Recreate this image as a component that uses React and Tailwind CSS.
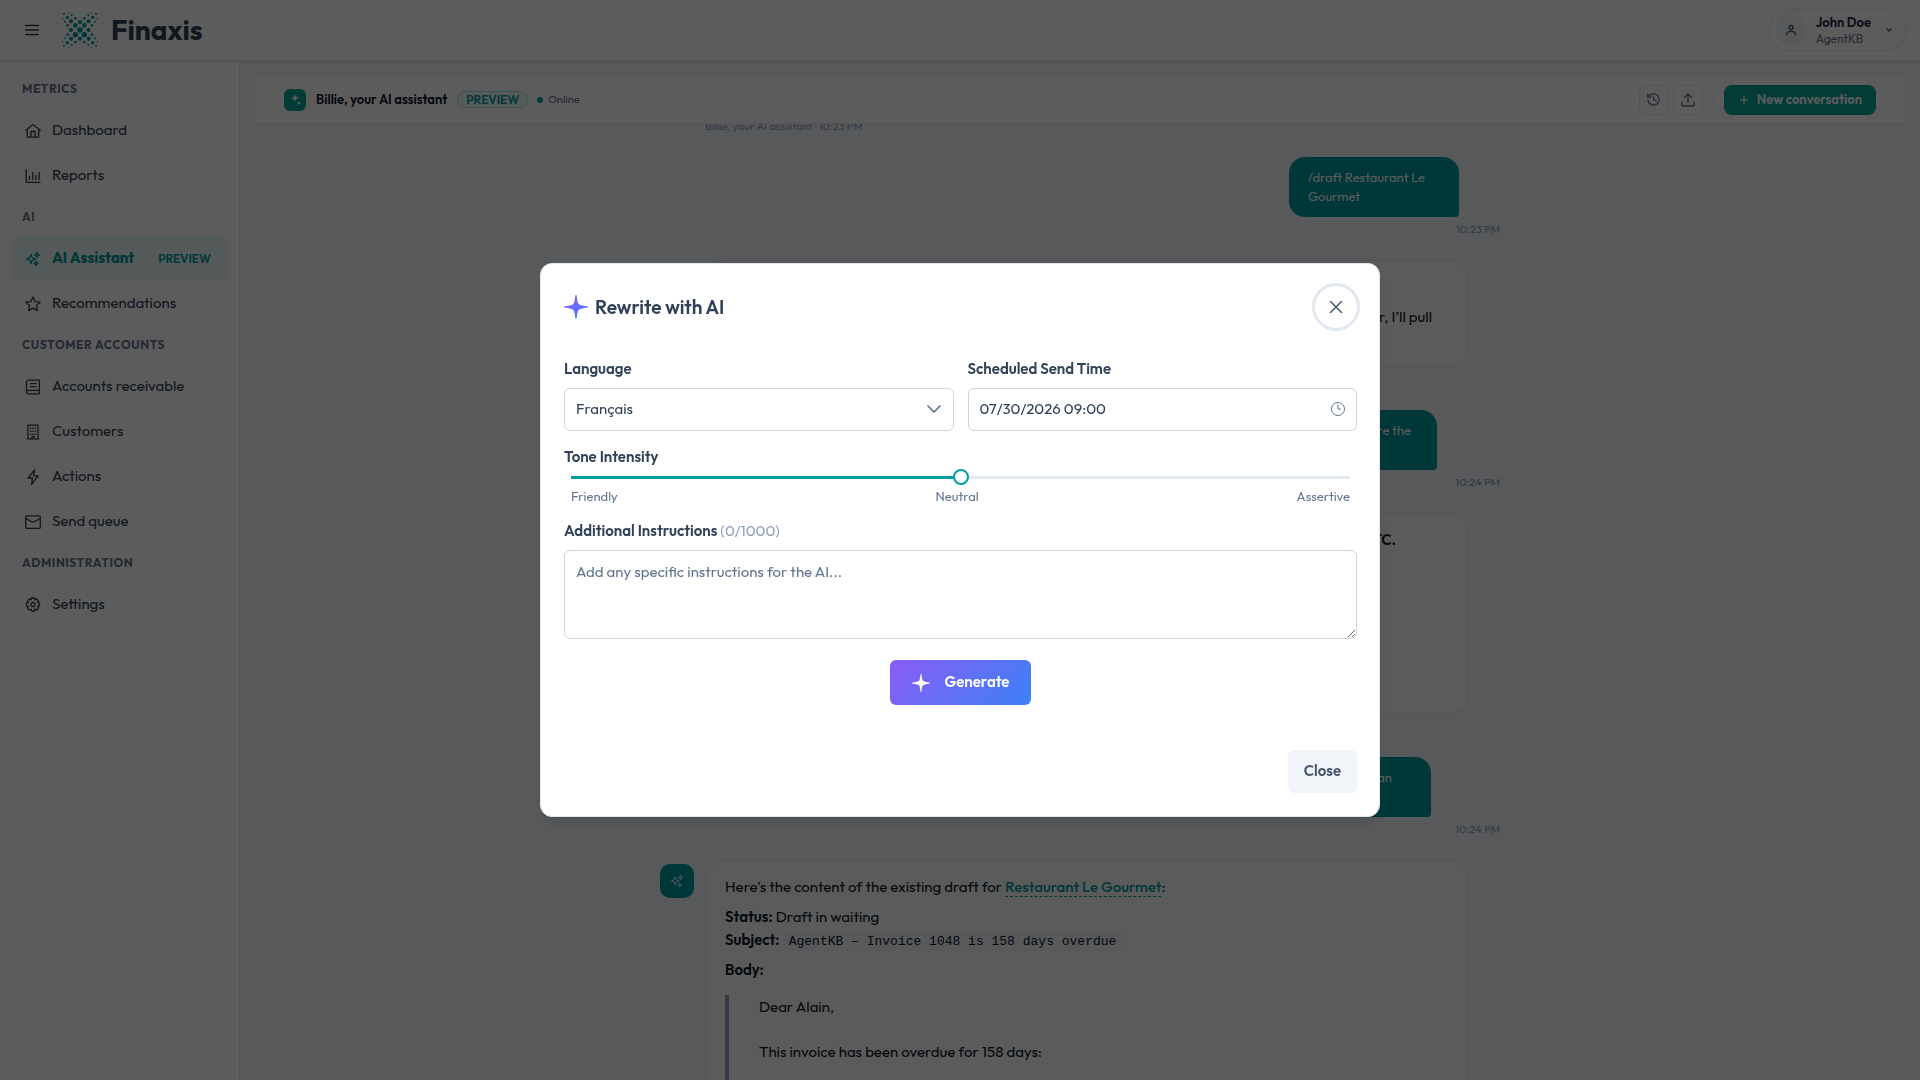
import React, { useState } from 'react';
import { ChevronDown, History, Plus, Upload, X } from 'lucide-react';
import { HiOutlineSparkles } from 'react-icons/hi2';

const LOGO_DOTS = [
  [54, 54, 8], [40, 40, 7], [67, 40, 7], [40, 68, 8], [67, 68, 8],
  [54, 30, 6], [54, 80, 6], [27, 54, 6], [80, 54, 6],
  [27, 28, 6], [80, 28, 6], [27, 80, 6], [80, 80, 6],
  [40, 19, 4], [67, 19, 4], [40, 90, 4], [67, 90, 4],
  [17, 40, 4], [90, 40, 4], [17, 68, 4], [90, 68, 4],
  [16, 16, 5], [92, 16, 5], [16, 92, 5], [92, 92, 5],
  [29, 10, 3], [79, 10, 3], [29, 98, 3], [79, 98, 3],
  [9, 29, 3], [99, 29, 3], [9, 79, 3], [99, 79, 3],
  [6, 6, 3], [102, 6, 3], [6, 102, 3], [102, 102, 3],
  [20, 3, 2], [88, 3, 2], [20, 106, 2], [88, 106, 2],
  [2, 20, 2], [106, 20, 2], [2, 88, 2], [106, 88, 2],
];

const Logo = () => (
  <svg viewBox="0 0 108 108" className="size-9" fill="#00999e" aria-hidden="true">
    {LOGO_DOTS.map(([cx, cy, r]) => (
      <circle key={`${cx}-${cy}`} cx={cx} cy={cy} r={r} />
    ))}
  </svg>
);

const Glyph = ({ children }) => (
  <svg
    viewBox="0 0 16 16"
    className="size-4 shrink-0"
    fill="none"
    stroke="currentColor"
    strokeWidth="1.3"
    strokeLinecap="round"
    strokeLinejoin="round"
    aria-hidden="true"
  >
    {children}
  </svg>
);

const MenuIcon = () => (
  <Glyph>
    <path d="M1.500 3.500h13M1.500 8h13M1.500 12.500h13" />
  </Glyph>
);

const HomeIcon = () => (
  <Glyph>
    <path d="M.8 7.200 8 1.600l7.200 5.600M2.300 6.200v8h11.400v-8M6 14.200V8.500h4v5.700" />
  </Glyph>
);

const ReportsIcon = () => (
  <Glyph>
    <path d="M1.200 1.500v12.800h13.800M4.500 11.500V8.500M7.700 11.500V4.500M10.900 11.500V7.500M14.100 11.500V4.500" />
  </Glyph>
);

const StarIcon = () => (
  <Glyph>
    <path d="m8 1 2.100 4.600 5 .6-3.700 3.400 1 5L8 12.100l-4.400 2.500 1-5L.9 6.200l5-.6z" />
  </Glyph>
);

const LedgerIcon = () => (
  <Glyph>
    <path d="M14.400 1.200H3a1.500 1.500 0 0 0-1.500 1.500v10.500A1.500 1.500 0 0 0 3 14.800h11.400zM1.600 12.600A1.500 1.500 0 0 1 3 11.400h11.400M5.300 4.700h5.800M5.300 7.700h5.800" />
  </Glyph>
);

const BuildingIcon = () => (
  <Glyph>
    <path d="M2 14.800h12M3 14.800V1.200h10v13.600M7 14.800v-2.500h2v2.500" />
    <path d="M5.700 3.500v7.800M8 3.500v7.800M10.300 3.500v7.800" strokeDasharray="1.400 1.600" strokeLinecap="butt" />
  </Glyph>
);

const BoltIcon = () => (
  <Glyph>
    <path d="M9.500 1 3 9h4.500l-1 6.500L13.200 6.800H8.600z" />
  </Glyph>
);

const EnvelopeIcon = () => (
  <Glyph>
    <rect x=".7" y="1.900" width="14.600" height="12.500" rx="1.200" />
    <path d="m.9 4.500 5.800 3.200q1.300.7 2.600 0l5.800-3.200" />
  </Glyph>
);

const GearIcon = () => (
  <Glyph>
    <path d="M6.600 1h2.800l.5 1.900 1.700-1 2 2-1 1.700 1.900.5v2.800l-1.900.5 1 1.700-2 2-1.700-1-.5 1.900H6.600l-.5-1.900-1.700 1-2-2 1-1.700-1.900-.5V6.100l1.900-.5-1-1.700 2-2 1.700 1z" />
    <circle cx="8" cy="7.500" r="2" />
  </Glyph>
);

const SparkleIcon = ({ className, gradient }) => (
  <svg viewBox="0 0 24 24" className={className} fill={gradient ? 'url(#sparkle)' : 'currentColor'} aria-hidden="true">
    {gradient && (
      <defs>
        <linearGradient id="sparkle" x1="0" y1="0" x2="1" y2="1">
          <stop offset="0" stopColor="#8b5cf6" />
          <stop offset="1" stopColor="#3b82f6" />
        </linearGradient>
      </defs>
    )}
    <path d="M11.500 0h1c.8 6 1.200 8 2.200 9s3.300 1.700 9.300 2.500v1c-6 .8-8.300 1.500-9.300 2.500s-1.400 3-2.200 9h-1c-.8-6-1.200-8-2.200-9S6 13.300 0 12.500v-1C6 10.700 8.300 10 9.300 9s1.400-3 2.200-9z" />
  </svg>
);

const NAV = [
  {
    title: 'Metrics',
    items: [
      { label: 'Dashboard', icon: HomeIcon },
      { label: 'Reports', icon: ReportsIcon },
    ],
  },
  {
    title: 'AI',
    items: [
      { label: 'AI Assistant', icon: HiOutlineSparkles, active: true, tag: 'PREVIEW' },
      { label: 'Recommendations', icon: StarIcon },
    ],
  },
  {
    title: 'Customer accounts',
    items: [
      { label: 'Accounts receivable', icon: LedgerIcon },
      { label: 'Customers', icon: BuildingIcon },
      { label: 'Actions', icon: BoltIcon },
      { label: 'Send queue', icon: EnvelopeIcon },
    ],
  },
  {
    title: 'Administration',
    items: [{ label: 'Settings', icon: GearIcon }],
  },
];

function TopBar() {
  return (
    <header className="relative z-10 flex h-[61px] shrink-0 items-center border-b border-slate-200 bg-white pl-6 pr-[13px] shadow-sm">
      <button type="button" aria-label="Toggle menu" className="text-slate-700">
        <MenuIcon />
      </button>
      <div className="ml-[22px] flex items-center gap-[13px]">
        <Logo />
        <span className="text-[28px] leading-9 font-bold text-slate-700">Finaxis</span>
      </div>
      <button
        type="button"
        className="ml-auto flex h-[42px] items-center gap-[10px] rounded-full border border-slate-200 pl-[6px] pr-[13px] text-left"
      >
        <span className="flex size-[30px] items-center justify-center rounded-full bg-slate-100 text-slate-600">
          <svg viewBox="0 0 12 12" className="size-3" fill="none" stroke="currentColor" strokeWidth="1.300" strokeLinecap="round" aria-hidden="true">
            <circle cx="6" cy="3.500" r="2" />
            <path d="M1.500 10.800a4.500 3.500 0 0 1 9 0" />
          </svg>
        </span>
        <span className="mr-1 flex flex-col">
          <span className="text-[13px] leading-[17px] font-semibold text-slate-800">John Doe</span>
          <span className="text-[12px] leading-4 text-slate-500">AgentKB</span>
        </span>
        <ChevronDown className="size-2 text-slate-600" strokeWidth={4} />
      </button>
    </header>
  );
}

function Sidebar() {
  return (
    <nav className="w-60 shrink-0 border-r border-slate-200 bg-white px-[11px] pt-[9px]">
      {NAV.map((group) => (
        <section key={group.title}>
          <h2 className="flex h-[38px] items-center pl-[11px] text-[12px] font-bold tracking-wider text-slate-500 uppercase">
            {group.title}
          </h2>
          {group.items.map(({ label, icon: Icon, active, tag }) => (
            <a
              key={label}
              href="#"
              className={`flex h-[45px] items-center gap-[11px] rounded-lg pl-[14px] pr-[17px] text-[15px] ${
                active ? 'bg-[#e8f7f6] font-bold text-[#00959a]' : 'text-slate-700'
              }`}
            >
              <Icon className="size-4 shrink-0" strokeWidth={2} />
              {label}
              {tag && <span className="ml-auto text-[12px] font-semibold text-[#009a98]">{tag}</span>}
            </a>
          ))}
        </section>
      ))}
    </nav>
  );
}

function AssistantBar() {
  return (
    <div className="relative z-10 flex h-12 shrink-0 items-center border-b border-slate-200 bg-white px-7">
      <span className="flex size-[22px] items-center justify-center rounded-md bg-[#0ba698] text-white">
        <svg viewBox="0 0 12 12" className="size-3" fill="currentColor" aria-hidden="true">
          <path d="M6 0q.5 3.500 4 4-3.500.5-4 4-.5-3.500-4-4 3.500-.5 4-4zM10 7q.3 1.700 2 2-1.700.3-2 2-.3-1.700-2-2 1.700-.3 2-2z" />
        </svg>
      </span>
      <h1 className="ml-[10px] text-[13px] font-semibold text-slate-900">Billie, your AI assistant</h1>
      <span className="ml-[10px] rounded-full border border-[#a5e5e2] bg-[#f0fdfb] px-2 text-[12px] leading-[15px] font-semibold text-[#009a98]">
        PREVIEW
      </span>
      <span className="ml-[9px] size-[6px] rounded-full bg-[#0ba698]" />
      <span className="ml-[5px] text-[11px] text-slate-500">Online</span>
      <div className="ml-auto flex items-center gap-1 text-slate-500">
        <button type="button" aria-label="History" className="flex size-[30px] items-center justify-center rounded-lg border border-slate-200">
          <History className="size-[15px]" />
        </button>
        <button type="button" aria-label="Export" className="flex size-[30px] items-center justify-center rounded-lg border border-slate-200">
          <Upload className="size-4" />
        </button>
        <span className="mx-[6px] h-[18px] w-px bg-slate-200" />
        <button type="button" className="flex h-[30px] items-center gap-[7px] rounded-lg bg-[#0ba698] px-[14px] text-[13px] font-semibold text-white">
          <Plus className="size-3" strokeWidth={2.5} />
          New conversation
        </button>
      </div>
    </div>
  );
}

function UserMessage({ time, className, children }) {
  return (
    <div className="flex flex-col items-end">
      <div className={`h-[60px] rounded-2xl rounded-br bg-[#00999e] py-[11px] text-[13px] leading-[19px] text-white ${className}`}>
        {children}
      </div>
      <span className="mt-1 text-[11px] leading-4 text-slate-400">{time}</span>
    </div>
  );
}

function AssistantMessage({ className, time, children }) {
  return (
    <div className="flex items-start gap-3">
      <span className="mt-1 flex size-[34px] shrink-0 items-center justify-center rounded-[10px] bg-[#00999e] text-white">
        <HiOutlineSparkles className="size-[14px]" />
      </span>
      <div className="mr-8 flex-1">
        <div className={`rounded-2xl border border-slate-200 bg-[#fafdfa] px-[18px] py-[14px] text-[15px] leading-[23px] text-slate-900 ${className}`}>
          {children}
        </div>
        {time && <span className="mt-1 block text-[11px] leading-4 text-slate-400">Billie, your AI assistant · {time}</span>}
      </div>
    </div>
  );
}

function Chat() {
  return (
    <div className="min-h-0 flex-1 overflow-hidden">
      <div className="mx-auto -mt-[6px] flex max-w-[840px] flex-col gap-[23px]">
        <span className="ml-[45px] text-[11px] leading-4 text-slate-400">Billie, your AI assistant · 10:23 PM</span>
        <UserMessage time="10:23 PM" className="mr-[41px] w-[170px] px-[19px]">
          /draft Restaurant Le Gourmet
        </UserMessage>
        <AssistantMessage time="10:23 PM" className="h-[107px]">
          <p className="mt-[30px] mr-[17px] text-right">Give me the customer, I’ll pull</p>
        </AssistantMessage>
        <UserMessage time="10:24 PM" className="mr-[63px] w-[200px] pl-[19px] pr-[26px]">
          <p className="text-right">Prepare the</p>
        </UserMessage>
        <AssistantMessage time="10:24 PM" className="h-[201px]">
          <p className="mr-[53px] text-right font-semibold">BTC.</p>
        </AssistantMessage>
        <UserMessage time="10:24 PM" className="mr-[69px] w-[200px] pl-[19px] pr-[39px]">
          <p className="text-right">Write an</p>
        </UserMessage>
        <AssistantMessage>
          <p>
            Here’s the content of the existing draft for{' '}
            <a href="#" className="border-b border-dashed border-[#00999e] font-medium text-[#009a98]">
              Restaurant Le Gourmet
            </a>
            :
          </p>
          <p className="mt-[7px]">
            <strong className="font-semibold">Status:</strong> Draft in waiting
            <br />
            <strong className="font-semibold">Subject:</strong>{' '}
            <code className="rounded bg-slate-100 px-[6px] py-[2px] font-['Liberation_Mono',monospace] text-[13px] leading-4">
              AgentKB – Invoice 1048 is 158 days overdue
            </code>
          </p>
          <p className="mt-[7px]">
            <strong className="font-semibold">Body:</strong>
          </p>
          <blockquote className="mt-[14px] border-l-4 border-slate-400 pb-20 pl-[30px]">
            <p>Dear Alain,</p>
            <p className="mt-[22px]">This invoice has been overdue for 158 days:</p>
          </blockquote>
        </AssistantMessage>
      </div>
    </div>
  );
}

function RewriteDialog() {
  const [language, setLanguage] = useState('Français');
  const [sendTime, setSendTime] = useState('07/30/2026 09:00');
  const [tone, setTone] = useState(50);
  const [instructions, setInstructions] = useState('');

  const field = 'h-[43px] w-full rounded-md border border-slate-300 bg-white px-[11px] text-[15px] text-slate-700 outline-none';
  const label = 'block text-[15px] leading-5 font-semibold text-slate-700';

  return (
    <div className="fixed inset-0 z-50 flex items-center justify-center bg-black/64">
      <div
        role="dialog"
        aria-modal="true"
        aria-labelledby="rewrite-title"
        className="w-full max-w-[840px] rounded-xl border border-slate-200 bg-white pt-[19px] pr-[22px] pb-[23px] pl-[23px] shadow-lg"
      >
        <div className="flex items-center">
          <SparkleIcon className="size-6" gradient />
          <h2 id="rewrite-title" className="ml-[7px] text-[19px] leading-6 font-semibold text-slate-700">
            Rewrite with AI
          </h2>
          <button
            type="button"
            aria-label="Close dialog"
            className="-mr-[3px] ml-auto flex size-12 items-center justify-center rounded-full border-3 border-slate-200 text-slate-600"
          >
            <X className="size-[22px]" strokeWidth={1.5} />
          </button>
        </div>

        <div className="mt-[28px] grid grid-cols-2 gap-[14px]">
          <div>
            <label htmlFor="language" className={label}>Language</label>
            <div className="relative mt-[9px]">
              <select
                id="language"
                value={language}
                onChange={(e) => setLanguage(e.target.value)}
                className={`${field} appearance-none`}
              >
                <option>Français</option>
                <option>English</option>
              </select>
              <ChevronDown className="pointer-events-none absolute top-[9px] right-2 size-6 text-slate-500" strokeWidth={1.75} />
            </div>
          </div>
          <div>
            <label htmlFor="send-time" className={label}>Scheduled Send Time</label>
            <div className="relative mt-[9px]">
              <input
                id="send-time"
                type="text"
                value={sendTime}
                onChange={(e) => setSendTime(e.target.value)}
                className={`${field} pb-[2px]`}
              />
              <svg
                viewBox="0 0 16 16"
                className="pointer-events-none absolute top-[13px] right-[11px] size-4 text-slate-500"
                fill="none"
                stroke="currentColor"
                aria-hidden="true"
              >
                <circle cx="8" cy="8" r="6.500" />
                <path d="M8 3.500V8h3" />
              </svg>
            </div>
          </div>
        </div>

        <label htmlFor="tone" className={`${label} mt-4`}>Tone Intensity</label>
        <div className="mt-[2px] px-[7px]">
          <input
            id="tone"
            type="range"
            value={tone}
            onChange={(e) => setTone(Number(e.target.value))}
            className="block h-4 w-full appearance-none bg-[length:100%_3px] bg-center bg-no-repeat outline-none [&::-webkit-slider-thumb]:size-4 [&::-webkit-slider-thumb]:appearance-none [&::-webkit-slider-thumb]:rounded-full [&::-webkit-slider-thumb]:border-2 [&::-webkit-slider-thumb]:border-solid [&::-webkit-slider-thumb]:border-[#009fa3] [&::-webkit-slider-thumb]:bg-white"
            style={{ backgroundImage: `linear-gradient(to right, #009fa3 ${tone}%, #e2e8f0 ${tone}%)` }}
          />
          <div className="mt-[3px] flex justify-between text-[13px] leading-4 text-slate-500">
            <span>Friendly</span>
            <span>Neutral</span>
            <span>Assertive</span>
          </div>
        </div>

        <label htmlFor="instructions" className={`${label} mt-[17px]`}>
          Additional Instructions{' '}
          <span className="font-normal text-slate-400">({instructions.length}/1000)</span>
        </label>
        <textarea
          id="instructions"
          value={instructions}
          maxLength={1000}
          onChange={(e) => setInstructions(e.target.value)}
          placeholder="Add any specific instructions for the AI..."
          className="mt-[9px] block h-[89px] w-full resize rounded-md border border-slate-300 px-[11px] py-[9px] text-[15px] leading-[23px] text-slate-700 outline-none placeholder:text-slate-500"
        />

        <div className="mt-[21px] flex justify-center">
          <button
            type="button"
            className="flex h-[45px] items-center gap-[15px] rounded-md bg-linear-135/srgb from-[#8b5cf6] to-[#3b82f6] px-[22px] text-[15px] font-semibold text-white"
          >
            <SparkleIcon className="size-[18px]" />
            Generate
          </button>
        </div>

        <div className="mt-[45px] flex justify-end">
          <button type="button" className="h-[43px] rounded-md bg-slate-100 px-4 text-[15px] font-semibold text-slate-600">
            Close
          </button>
        </div>
      </div>
    </div>
  );
}

export default function App() {
  return (
    <div className="flex h-screen flex-col overflow-hidden bg-slate-100 font-[Outfit,Lato,sans-serif]">
      <TopBar />
      <div className="flex min-h-0 flex-1">
        <Sidebar />
        <main className="flex min-w-0 flex-1 flex-col px-4 pt-[15px]">
          <AssistantBar />
          <Chat />
        </main>
      </div>
      <RewriteDialog />
    </div>
  );
}
